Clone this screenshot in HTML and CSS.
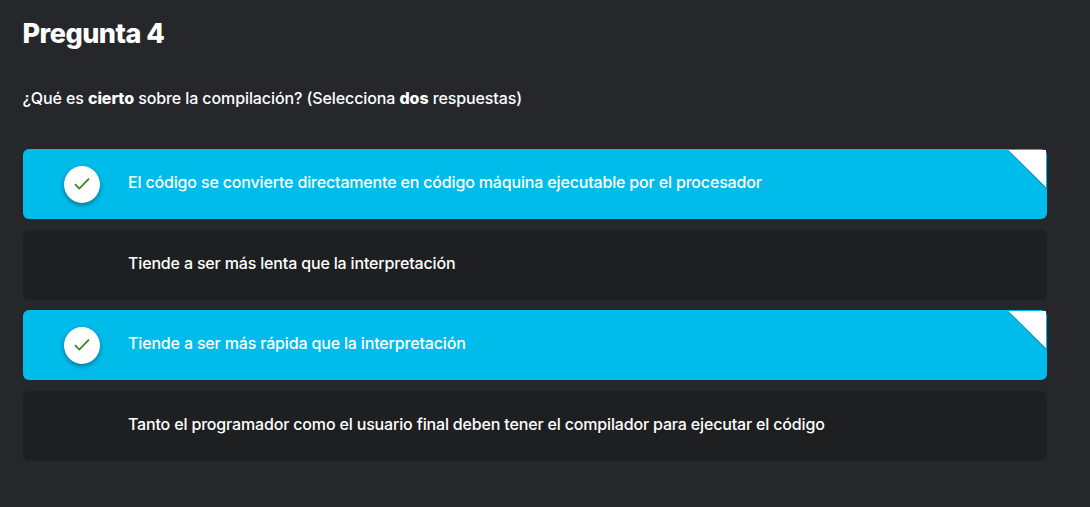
FILE: index.html
```html
<!DOCTYPE html>
<html lang="es">
<head>
<meta charset="utf-8">
<title>Pregunta 4</title>
<link rel="stylesheet" href="styles.css">
</head>
<body>
<main class="question">
  <h1 class="title">Pregunta 4</h1>
  <p class="prompt">¿Qué es <b>cierto</b> sobre la compilación? (Selecciona <b>dos</b> respuestas)</p>
  <ul class="answers">
    <li class="answer selected">
      <span class="check"><svg viewBox="0 0 36 37"><path d="M11 18.2 15.3 22.5 25 12.7"/></svg></span>
      <span class="label">El código se convierte directamente en código máquina ejecutable por el procesador</span>
      <svg class="corner" viewBox="0 0 40 41"><path class="fold-edge" d="M0 1.5 38 40V36L3 1z"/><path class="fold" d="M.3 1H38V38.2z"/></svg>
    </li>
    <li class="answer"><span class="label">Tiende a ser más lenta que la interpretación</span></li>
    <li class="answer selected">
      <span class="check"><svg viewBox="0 0 36 37"><path d="M11 18.2 15.3 22.5 25 12.7"/></svg></span>
      <span class="label">Tiende a ser más rápida que la interpretación</span>
      <svg class="corner" viewBox="0 0 40 41"><path class="fold-edge" d="M0 1.5 38 40V36L3 1z"/><path class="fold" d="M.3 1H38V38.2z"/></svg>
    </li>
    <li class="answer"><span class="label">Tanto el programador como el usuario final deben tener el compilador para ejecutar el código</span></li>
  </ul>
</main>
</body>
</html>
```
FILE: styles.css
```css
* { box-sizing: border-box; }
body { margin: 0; min-height: 507px; background: #25272a; color: #fff; font-family: Inter, "Liberation Sans", sans-serif; font-size: 16px; font-weight: 450; }
.question { padding: 16px 43px 0 23px; }
.title { margin: 0 0 0 -0.5px; font-size: 27px; line-height: 35px; font-weight: 800; letter-spacing: -0.5px; white-space: nowrap; }
.prompt { margin: 35px 0 0 -0.5px; line-height: 24px; white-space: nowrap; letter-spacing: -0.1px; }
.prompt b { font-weight: 800; }
.answers { list-style: none; margin: 39px 0 0; padding: 0; display: grid; grid-auto-rows: 70px; row-gap: 10.6px; }
.answer { position: relative; display: grid; grid-template-columns: 105px 1fr; border-radius: 6px; background: #1e1f21; }
.selected { background: #00bceb; }
.label { grid-column: 2; grid-row: 1; justify-self: start; line-height: 24px; padding-top: 21px; white-space: nowrap; letter-spacing: -0.165px; }
.check { grid-column: 1; grid-row: 1; margin: 17px 0 0 41px; width: 36px; height: 37px; border-radius: 50%; background: #fff; box-shadow: 0 2px 5px rgba(0,0,0,.4); }
.check svg { display: block; width: 36px; height: 37px; fill: none; stroke: #2e8420; stroke-width: 1.7; }
.corner { position: absolute; right: -1px; top: 0; width: 40px; height: 41px; }
.fold { fill: #fff; }
.fold-edge { fill: #078dad; }
```
